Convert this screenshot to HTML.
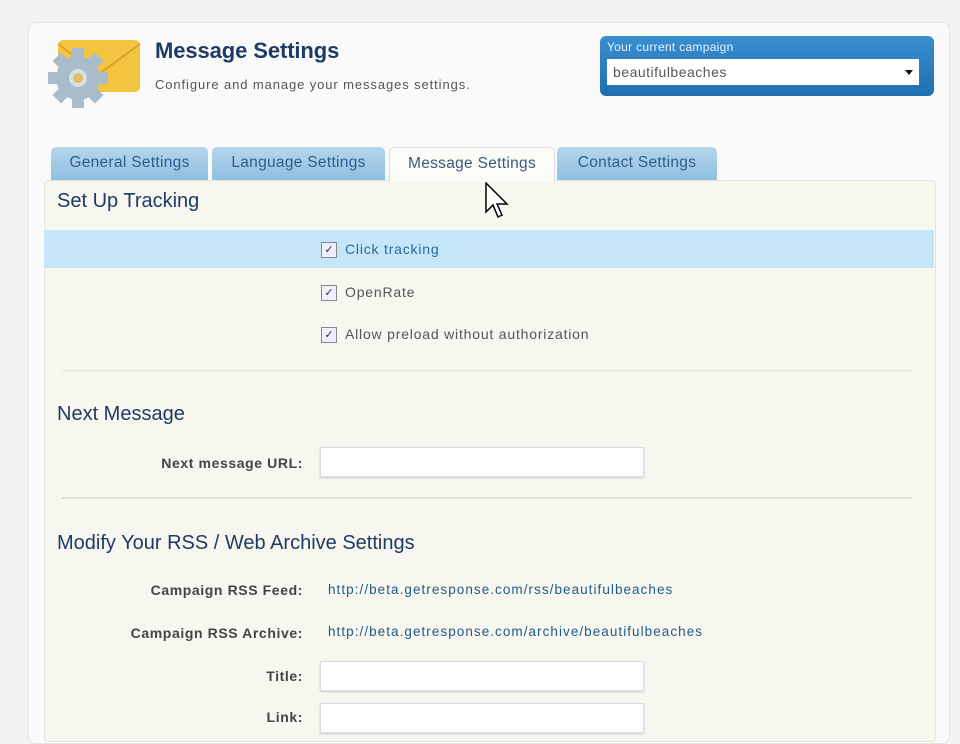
<!DOCTYPE html>
<html><head><style>
body{margin:0;width:960px;height:720px;background:#f2f2f2;font-family:"Liberation Sans",sans-serif;overflow:hidden;position:relative}
.card{position:absolute;left:28px;top:22px;width:920px;height:720px;background:#fafafa;border:1px solid #e4e4e4;border-radius:8px}
.abs{position:absolute}
h1{position:absolute;left:155px;top:38px;margin:0;font-size:22px;color:#1e3a66;font-weight:bold;letter-spacing:-0.1px}
.sub{left:155px;top:77px;font-size:13px;letter-spacing:0.9px;color:#555}
.camp{left:600px;top:36px;width:334px;height:60px;border-radius:6px;background:linear-gradient(#3a8fd0,#1f6fb0)}
.camp .l{position:absolute;left:7px;top:4px;color:#e8f2fb;font-size:12px;letter-spacing:0.3px}
.camp .s{position:absolute;left:7px;top:23px;width:312px;height:26px;background:#fff;color:#555;font-size:14px;letter-spacing:0.5px;line-height:26px;padding-left:6px;box-sizing:border-box}
.camp .s:after{content:"";position:absolute;right:6px;top:11px;border:4px solid transparent;border-top:5px solid #111}
.tab{position:absolute;top:147px;height:33px;background:linear-gradient(#b6d6ec,#8fbfe0);color:#2b5f8c;font-size:15.5px;letter-spacing:0.3px;text-align:center;line-height:32px;border-radius:5px 5px 0 0}
.tab.a{background:#fbfbf7;color:#3a5a7a;border:1px solid #ddd;border-bottom:none}
.panel{position:absolute;left:44px;top:180px;width:890px;height:560px;background:#f8f7ef;border:1px solid #e5e5dc;border-radius:4px}
.h{position:absolute;left:57px;font-size:20px;color:#1e3a66}
.hl{position:absolute;left:44px;top:230px;width:890px;height:38px;background:#c4e6f8}
.cb{position:absolute;left:321px;width:14px;height:14px;border:1px solid #888;background:#eef;font-size:11px;line-height:14px;text-align:center;color:#333}
.ct{position:absolute;left:345px;font-size:14px;letter-spacing:0.8px;color:#555}
.lab{position:absolute;right:657px;font-size:14px;letter-spacing:0.6px;font-weight:bold;color:#444;text-align:right}
.in{position:absolute;left:320px;width:322px;height:28px;background:#fff;border:1px solid #ddd;box-shadow:0 1px 2px #ccc}
.lnk{position:absolute;left:328px;font-size:13.5px;letter-spacing:1.05px;color:#1f5a8a}
.hr{position:absolute;left:62px;width:850px;height:2px;background:#e3e2d9}
</style></head><body>
<div class="card"></div>
<svg class="abs" style="left:44px;top:36px" width="100" height="80" viewBox="0 0 100 80">
<rect x="14" y="4" width="82" height="52" rx="5" fill="#f2c440"/>
<path d="M14 8 L55 38 L96 8" stroke="#d9a22a" stroke-width="2" fill="none"/>
<g transform="translate(34,42)" fill="#a9bccb">
<circle r="22"/>
<g><rect x="-6" y="-30" width="12" height="12"/><rect x="-6" y="18" width="12" height="12"/><rect x="-30" y="-6" width="12" height="12"/><rect x="18" y="-6" width="12" height="12"/>
<rect x="-6" y="-30" width="12" height="12" transform="rotate(45)"/><rect x="-6" y="18" width="12" height="12" transform="rotate(45)"/><rect x="-30" y="-6" width="12" height="12" transform="rotate(45)"/><rect x="18" y="-6" width="12" height="12" transform="rotate(45)"/></g>
<circle r="9" fill="#d6e0e8"/><circle r="5" fill="#e0c060"/></g>
</svg>
<h1>Message Settings</h1>
<div class="abs sub">Configure and manage your messages settings.</div>
<div class="abs camp"><div class="l">Your current campaign</div><div class="s">beautifulbeaches</div></div>
<div class="tab" style="left:51px;width:157px">General Settings</div>
<div class="tab" style="left:212px;width:173px">Language Settings</div>
<div class="tab" style="left:557px;width:160px">Contact Settings</div>
<div class="panel"></div>
<div class="tab a" style="left:389px;width:164px;height:34px;">Message Settings</div>
<div class="h" style="top:190px">Set Up Tracking</div>
<div class="hl"></div>
<div class="cb" style="top:242px">✓</div><div class="ct" style="top:241px;color:#2b6a9a">Click tracking</div>
<div class="cb" style="top:285px">✓</div><div class="ct" style="top:284px">OpenRate</div>
<div class="cb" style="top:327px">✓</div><div class="ct" style="top:326px">Allow preload without authorization</div>
<div class="hr" style="top:370px;height:1px"></div>
<div class="h" style="top:403px">Next Message</div>
<div class="lab" style="top:455px">Next message URL:</div>
<div class="in" style="top:447px"></div>
<div class="hr" style="top:497px"></div>
<div class="h" style="top:532px">Modify Your RSS / Web Archive Settings</div>
<div class="lab" style="top:582px">Campaign RSS Feed:</div>
<div class="lnk" style="top:582px">http://beta.getresponse.com/rss/beautifulbeaches</div>
<div class="lab" style="top:625px">Campaign RSS Archive:</div>
<div class="lnk" style="top:624px">http://beta.getresponse.com/archive/beautifulbeaches</div>
<div class="lab" style="top:668px">Title:</div>
<div class="in" style="top:661px"></div>
<div class="lab" style="top:709px">Link:</div>
<div class="in" style="top:703px"></div>
<svg class="abs" style="left:485px;top:182px" width="26" height="40" viewBox="0 0 26 40"><path d="M1 1 L1 30 L8 23 L13 35 L17 33 L12 22 L22 22 Z" fill="#fff" stroke="#000" stroke-width="1.5"/></svg>
</body></html>
